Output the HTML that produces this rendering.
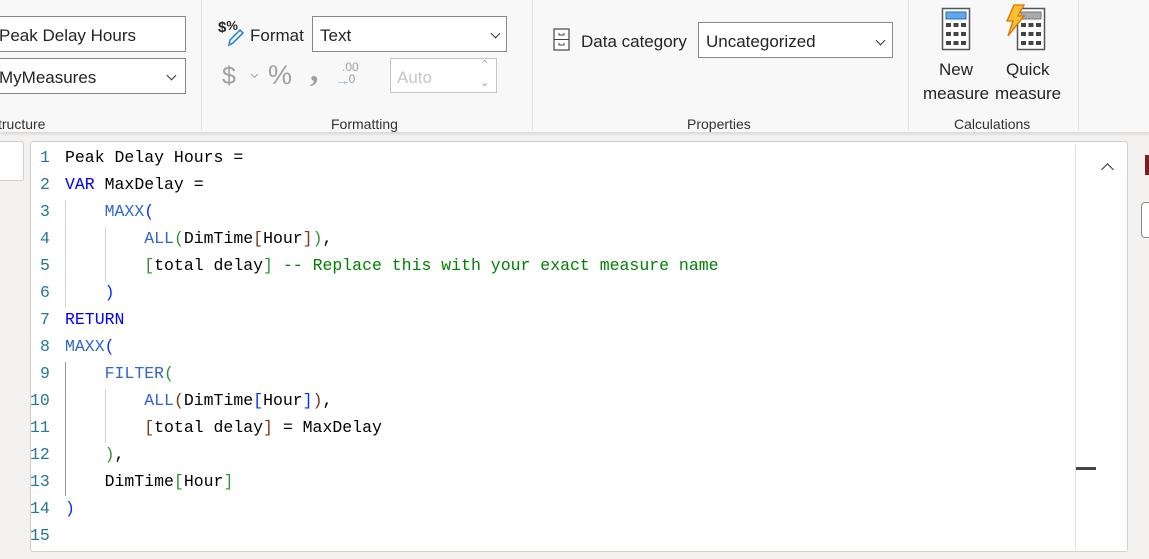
<!DOCTYPE html>
<html><head><meta charset="utf-8"><style>
*{margin:0;padding:0;box-sizing:border-box}
body{width:1149px;height:559px;overflow:hidden;background:#f3f2f1;font-family:"Liberation Sans",sans-serif;position:relative;color:#252423}
.rib{position:absolute;left:0;top:0;width:1149px;height:132px;background:#f8f8f8;box-shadow:0 2px 3px rgba(0,0,0,.12)}
.a{position:absolute;white-space:nowrap}
.inp{position:absolute;background:#fff;border:1px solid #8a8886;font-size:17px;padding-left:0;line-height:38px}
.sep{position:absolute;top:0;width:1px;height:130px;background:#e1dfdd}
.lbl{position:absolute;top:116px;font-size:14px;color:#323130}
.chev{position:absolute;width:7px;height:7px;border-right:1.6px solid #333;border-bottom:1.6px solid #333;transform:rotate(45deg)}
.ed{position:absolute;left:30px;top:141px;width:1098px;height:411px;background:#fff;border:1px solid #d2d0ce;border-radius:3px}
.code{position:absolute;left:-1px;top:2px;font-family:"Liberation Mono",monospace;font-size:16.5px;line-height:27px;white-space:pre}
.ln{position:absolute;left:10px;width:20px;color:#237893}
.tx{position:absolute;left:35px;color:#000}
.k{color:#0000ff}.f{color:#3165cc}.c{color:#008000}
.p1{color:#0431fa}.p2{color:#319331}.p3{color:#7b3814}
.g{position:absolute;width:1px;background:#d3d3d3}
</style></head><body>
<div class="rib">
<div class="inp" style="left:-2px;top:16px;width:188px;height:36px">Peak Delay Hours</div>
<div class="inp" style="left:-2px;top:58px;width:188px;height:36px">MyMeasures</div>
<div class="chev" style="left:168px;top:72px"></div>
<div class="lbl" style="left:-2px">tructure</div>
<div class="sep" style="left:201px"></div>
<div class="a" style="left:218px;top:18px;font-size:15px;font-weight:bold">$<span style="font-size:13px;vertical-align:2px">%</span></div>
<svg class="a" style="left:226px;top:28px" width="18" height="20"><path d="M3 17 L4 12 L14 2 L17 5 L7 15 Z" fill="none" stroke="#2b88d8" stroke-width="1.6"/></svg>
<div class="a" style="left:250px;top:26px;font-size:17px">Format</div>
<div class="inp" style="left:312px;top:16px;width:195px;height:36px;padding-left:7px">Text</div>
<div class="chev" style="left:492px;top:30px"></div>
<div class="a" style="left:222px;top:62px;font-size:25px;color:#a19f9d">$</div>
<div class="chev" style="left:252px;top:72px;width:5px;height:5px;border-color:#a19f9d;border-width:1.2px"></div>
<div class="a" style="left:268px;top:60px;font-size:27px;color:#a19f9d">%</div>
<div class="a" style="left:310px;top:52px;font-size:34px;font-weight:bold;color:#a19f9d;font-family:'Liberation Serif',serif">,</div>
<div class="a" style="left:342px;top:61px;font-size:12px;line-height:12px;color:#a19f9d">.00<br>&nbsp;.0</div>
<div class="a" style="left:335px;top:72px;font-size:14px;color:#8fb8de">→</div>
<div class="inp" style="left:390px;top:58px;width:107px;height:35px;border-color:#c8c6c4;color:#c8c6c4;padding-left:6px">Auto</div>
<div class="a" style="left:480px;top:58px;font-size:11px;color:#a19f9d">⌃</div>
<div class="a" style="left:480px;top:76px;font-size:11px;color:#a19f9d">⌄</div>
<div class="lbl" style="left:331px">Formatting</div>
<div class="sep" style="left:532px"></div>
<svg class="a" style="left:553px;top:28px" width="18" height="24"><rect x="1" y="1" width="15" height="21" fill="#fff" stroke="#444" stroke-width="1.2"/><line x1="1" y1="11.5" x2="16" y2="11.5" stroke="#444"/><path d="M6 5v2h5V5M6 15v2h5v-2" fill="none" stroke="#444"/></svg>
<div class="a" style="left:581px;top:32px;font-size:17px">Data category</div>
<div class="inp" style="left:698px;top:22px;width:195px;height:36px;padding-left:7px">Uncategorized</div>
<div class="chev" style="left:877px;top:37px"></div>
<div class="lbl" style="left:687px">Properties</div>
<div class="sep" style="left:908px"></div>
<svg class="a" style="left:940px;top:6px" width="34" height="46"><rect x="2.5" y="2.5" width="27" height="41" fill="#fff" stroke="#555" stroke-width="1.5"/><rect x="6" y="6" width="20" height="7" fill="#62a8e8" stroke="#1f6fc0"/><g fill="#444"><rect x="6" y="17" width="5" height="4"/><rect x="13.5" y="17" width="5" height="4"/><rect x="21" y="17" width="5" height="4"/><rect x="6" y="26" width="5" height="4"/><rect x="13.5" y="26" width="5" height="4"/><rect x="21" y="26" width="5" height="4"/><rect x="6" y="35" width="5" height="4"/><rect x="13.5" y="35" width="5" height="4"/><rect x="21" y="35" width="5" height="4"/></g></svg>
<svg class="a" style="left:1002px;top:4px" width="46" height="48"><rect x="15.5" y="4.5" width="27" height="41" fill="#fff" stroke="#555" stroke-width="1.5"/><rect x="19" y="8" width="20" height="7" fill="#aaa" stroke="#777"/><g fill="#444"><rect x="19" y="19" width="5" height="4"/><rect x="26.5" y="19" width="5" height="4"/><rect x="34" y="19" width="5" height="4"/><rect x="19" y="28" width="5" height="4"/><rect x="26.5" y="28" width="5" height="4"/><rect x="34" y="28" width="5" height="4"/><rect x="19" y="37" width="5" height="4"/><rect x="26.5" y="37" width="5" height="4"/><rect x="34" y="37" width="5" height="4"/></g><path d="M12 1 L22 1 L16 12 L22 12 L6 32 L11 17 L5 17 Z" fill="#fbc02d" stroke="#e07000" stroke-width="1.3"/></svg>
<div class="a" style="left:939px;top:60px;font-size:17px">New</div>
<div class="a" style="left:923px;top:84px;font-size:17px">measure</div>
<div class="a" style="left:1006px;top:60px;font-size:17px">Quick</div>
<div class="a" style="left:995px;top:84px;font-size:17px">measure</div>
<div class="lbl" style="left:954px">Calculations</div>
<div class="sep" style="left:1078px"></div>
</div>
<div class="a" style="left:-5px;top:141px;width:29px;height:40px;background:#fff;border:1px solid #d2d0ce;border-radius:3px"></div>
<div class="ed">
<div style="position:absolute;left:1044px;top:3px;width:1px;height:405px;background:#e1dfdd"></div>
<div class="chev" style="left:1072px;top:23px;transform:rotate(225deg);width:9px;height:9px;border-width:1.5px"></div>
<div style="position:absolute;left:1045px;top:325px;width:20px;height:3px;background:#444"></div>
<div class="g" style="left:34px;top:58px;height:108px"></div>
<div class="g" style="left:34px;top:220px;height:134px;background:#999"></div>
<div class="g" style="left:74px;top:85px;height:54px"></div>
<div class="g" style="left:74px;top:247px;height:54px"></div>
<div class="code">
<div class="ln" style="top:0">1</div><div class="ln" style="top:27px">2</div><div class="ln" style="top:54px">3</div><div class="ln" style="top:81px">4</div><div class="ln" style="top:108px">5</div><div class="ln" style="top:135px">6</div><div class="ln" style="top:162px">7</div><div class="ln" style="top:189px">8</div><div class="ln" style="top:216px">9</div><div class="ln" style="top:243px;left:0">10</div><div class="ln" style="top:270px;left:0">11</div><div class="ln" style="top:297px;left:0">12</div><div class="ln" style="top:324px;left:0">13</div><div class="ln" style="top:351px;left:0">14</div><div class="ln" style="top:378px;left:0">15</div>
<div class="tx" style="top:0">Peak Delay Hours =
<span class="k">VAR</span> MaxDelay =
    <span class="f">MAXX</span><span class="p1">(</span>
        <span class="f">ALL</span><span class="p2">(</span>DimTime<span class="p3">[</span>Hour<span class="p3">]</span><span class="p2">)</span>,
        <span class="p2">[</span>total delay<span class="p2">]</span> <span class="c">-- Replace this with your exact measure name</span>
    <span class="p1">)</span>
<span class="k">RETURN</span>
<span class="f">MAXX</span><span class="p1">(</span>
    <span class="f">FILTER</span><span class="p2">(</span>
        <span class="f">ALL</span><span class="p3">(</span>DimTime<span class="p1">[</span>Hour<span class="p1">]</span><span class="p3">)</span>,
        <span class="p3">[</span>total delay<span class="p3">]</span> = MaxDelay
    <span class="p2">)</span>,
    DimTime<span class="p2">[</span>Hour<span class="p2">]</span>
<span class="p1">)</span>
</div>
</div>
</div>
<div class="a" style="left:1145px;top:155px;width:4px;height:20px;background:#7a1d1d"></div>
<div class="a" style="left:1141px;top:202px;width:20px;height:36px;background:#fff;border:1px solid #8a8886;border-radius:4px"></div>
</body></html>
